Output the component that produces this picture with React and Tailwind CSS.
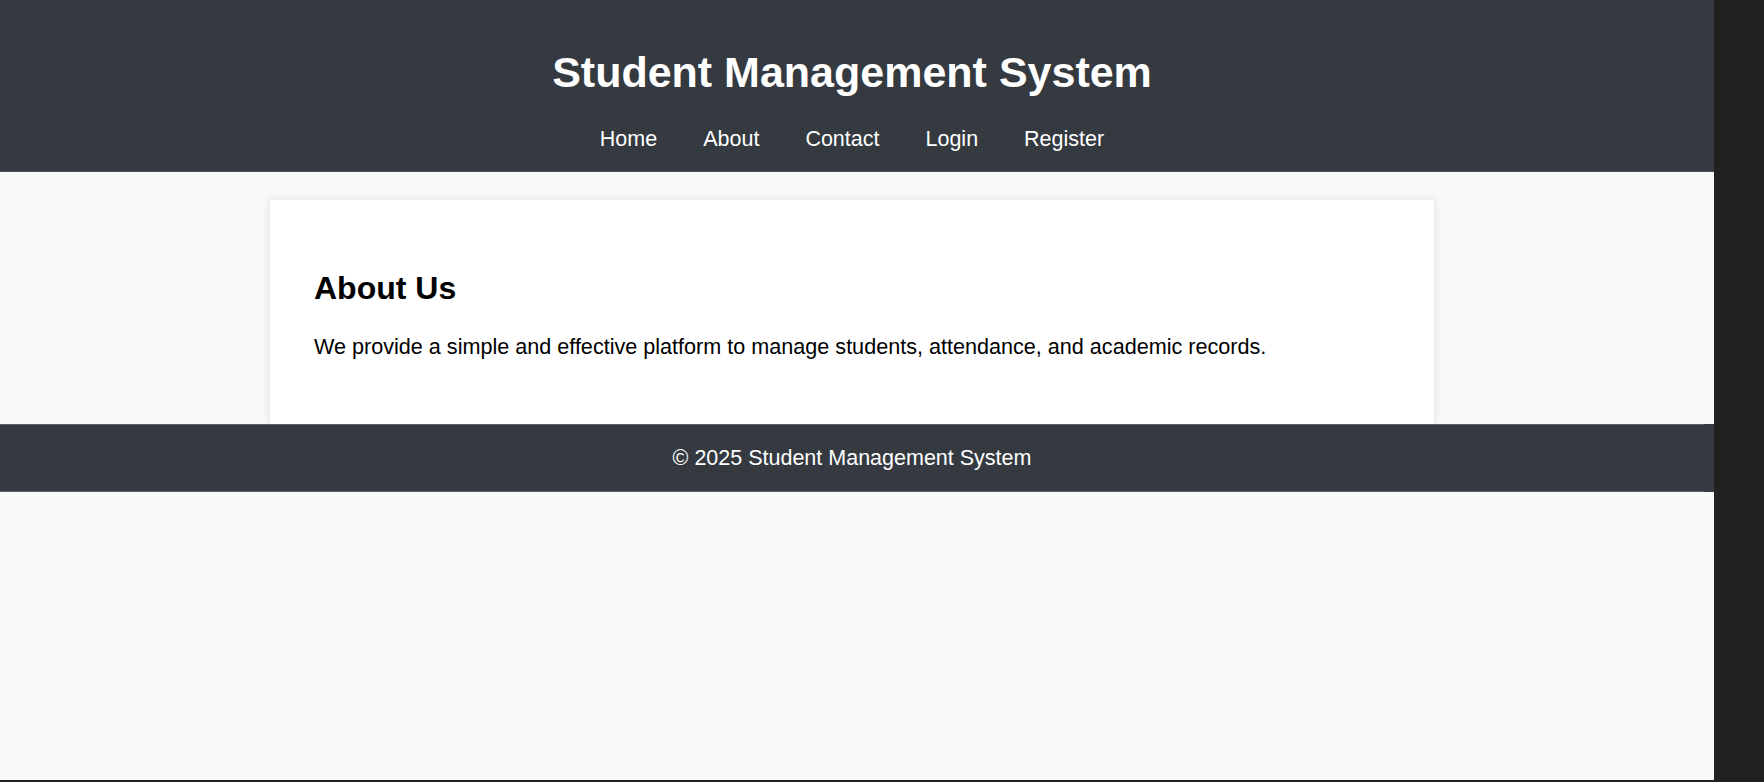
import React from 'react';

const navLinks = ['Home', 'About', 'Contact', 'Login', 'Register'];

function Header() {
  return (
    <header className="h-[172px] bg-[#343a40] text-white flex flex-col items-center pr-[10px] border-b border-[#4a5057]">
      <h1 className="mt-[49px] text-[43px] leading-[46px] font-bold">Student Management System</h1>
      <nav className="mt-[32px] flex gap-[46px] text-[21.5px] leading-[24px]">
        {navLinks.map((link) => (
          <a key={link} href="#" className="text-white">
            {link}
          </a>
        ))}
      </nav>
    </header>
  );
}

function AboutCard() {
  return (
    <section className="w-[1164px] mx-auto mt-[28px] bg-white shadow-[0_0_10px_rgba(0,0,0,0.1)] px-[44px] pt-[70px] pb-[66px]">
      <h2 className="text-[32px] leading-[37px] font-bold text-black">About Us</h2>
      <p className="mt-[28px] text-[21.6px] leading-[23px] text-black">
        We provide a simple and effective platform to manage students, attendance, and academic records.
      </p>
    </section>
  );
}

function Footer() {
  return (
    <footer className="h-[68px] bg-[#343a40] text-white flex items-center justify-center border-y border-[#5a6067] text-[21.5px]">
      © 2025 Student Management System
    </footer>
  );
}

export default function App() {
  return (
    <div className="h-[782px] flex flex-col font-['Liberation_Sans',Arial,sans-serif] overflow-hidden">
      <div className="flex flex-1 min-h-0">
        <div className="w-[1714px] bg-[#f8f9fa] flex flex-col">
          <Header />
          <div className="pr-[10px]">
            <AboutCard />
          </div>
          <div className="pr-[10px] bg-[#343a40]">
            <Footer />
          </div>
        </div>
        <div className="flex-1 bg-[#22211f]" />
      </div>
      <div className="h-[2px] bg-[#232220]" />
    </div>
  );
}
